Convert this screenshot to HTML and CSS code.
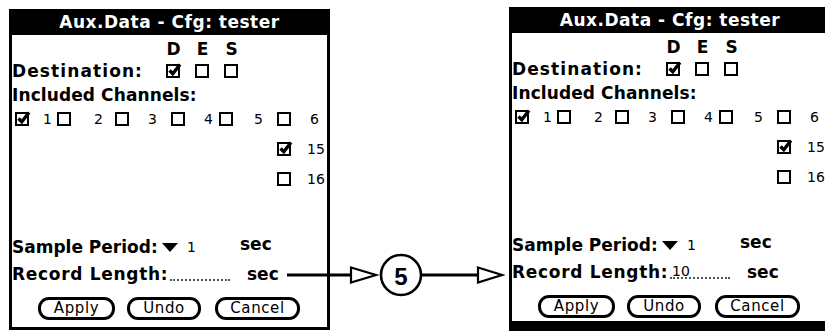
FILE: index.html
```html
<!DOCTYPE html>
<html>
<head>
<meta charset="utf-8">
<link rel="stylesheet" href="styles.css">
</head>
<body>
<svg class="defs" aria-hidden="true">
  <symbol id="cb" viewBox="0 0 16 16"><rect x="1" y="3" width="12" height="12" fill="#fff" stroke="#000" stroke-width="2"/></symbol>
  <symbol id="cbx" viewBox="0 0 16 16"><rect x="1" y="3" width="12" height="12" fill="#fff" stroke="#000" stroke-width="2"/><path d="M3.5 8.5 L6.8 11.8 L14 2.5" fill="none" stroke="#000" stroke-width="3.4"/></symbol>
  <symbol id="tri" viewBox="0 0 16 9"><path d="M0 0 H16 L8 9 Z" fill="#000"/></symbol>
</svg>
<div class="stage">
  <section class="screen screen-a">
    <div class="titlebar">Aux.Data - Cfg: tester</div>
    <div class="row des-head"><span class="label-space"></span><span class="cell">D</span><span class="cell">E</span><span class="cell">S</span></div>
    <div class="row dest"><span class="label-space dest-label">Destination:</span><span class="cell"><svg class="box"><use href="#cbx"/></svg></span><span class="cell"><svg class="box"><use href="#cb"/></svg></span><span class="cell"><svg class="box"><use href="#cb"/></svg></span></div>
    <div class="row inc">Included Channels:</div>
    <div class="channels">
      <div class="ch ch-1"><svg class="box"><use href="#cbx"/></svg><span>1</span></div>
      <div class="ch ch-2"><svg class="box"><use href="#cb"/></svg><span>2</span></div>
      <div class="ch"><svg class="box"><use href="#cb"/></svg><span>3</span></div>
      <div class="ch"><svg class="box"><use href="#cb"/></svg><span>4</span></div>
      <div class="ch ch-5"><svg class="box"><use href="#cb"/></svg><span>5</span></div>
      <div class="ch"><svg class="box"><use href="#cb"/></svg><span>6</span></div>
      <div class="ch ch-x"><svg class="box"><use href="#cbx"/></svg><span>15</span></div>
      <div class="ch ch-x"><svg class="box"><use href="#cb"/></svg><span>16</span></div>
    </div>
    <div class="row sample"><span class="sp-label">Sample Period:</span><span class="sp-value"><svg class="tri"><use href="#tri"/></svg><span>1</span></span><span class="unit-raised">sec</span></div>
    <div class="row record"><span class="rl-label">Record Length:</span><span class="field"></span><span class="unit">sec</span></div>
    <div class="buttons"><span class="btn btn-apply">Apply</span><span class="btn btn-undo">Undo</span><span class="btn btn-cancel">Cancel</span></div>
  </section>
  <section class="screen screen-b">
    <div class="titlebar">Aux.Data - Cfg: tester</div>
    <div class="row des-head"><span class="label-space"></span><span class="cell">D</span><span class="cell">E</span><span class="cell">S</span></div>
    <div class="row dest"><span class="label-space dest-label">Destination:</span><span class="cell"><svg class="box"><use href="#cbx"/></svg></span><span class="cell"><svg class="box"><use href="#cb"/></svg></span><span class="cell"><svg class="box"><use href="#cb"/></svg></span></div>
    <div class="row inc">Included Channels:</div>
    <div class="channels">
      <div class="ch ch-1"><svg class="box"><use href="#cbx"/></svg><span>1</span></div>
      <div class="ch ch-2"><svg class="box"><use href="#cb"/></svg><span>2</span></div>
      <div class="ch"><svg class="box"><use href="#cb"/></svg><span>3</span></div>
      <div class="ch"><svg class="box"><use href="#cb"/></svg><span>4</span></div>
      <div class="ch ch-5"><svg class="box"><use href="#cb"/></svg><span>5</span></div>
      <div class="ch"><svg class="box"><use href="#cb"/></svg><span>6</span></div>
      <div class="ch ch-x"><svg class="box"><use href="#cbx"/></svg><span>15</span></div>
      <div class="ch ch-x"><svg class="box"><use href="#cb"/></svg><span>16</span></div>
    </div>
    <div class="row sample"><span class="sp-label">Sample Period:</span><span class="sp-value"><svg class="tri"><use href="#tri"/></svg><span>1</span></span><span class="unit-raised">sec</span></div>
    <div class="row record"><span class="rl-label">Record Length:</span><span class="field">10</span><span class="unit">sec</span></div>
    <div class="buttons"><span class="btn btn-apply">Apply</span><span class="btn btn-undo">Undo</span><span class="btn btn-cancel">Cancel</span></div>
  </section>
  <svg class="connector" viewBox="0 0 220 50" width="220" height="50">
    <line x1="2" y1="25" x2="66" y2="25" stroke="#000" stroke-width="3"/>
    <path d="M66 17.5 L91 25 L66 32.5 Z" fill="#fff" stroke="#000" stroke-width="2.2" stroke-linejoin="miter"/>
    <circle cx="116" cy="25" r="20" fill="#fff" stroke="#000" stroke-width="2.6"/>
    <text x="116" y="26" text-anchor="middle" dominant-baseline="central" font-family="Liberation Sans, Arial, sans-serif" font-weight="bold" font-size="24">5</text>
    <line x1="136" y1="25" x2="193" y2="25" stroke="#000" stroke-width="3"/>
    <path d="M193 17.5 L217 25 L193 32.5 Z" fill="#fff" stroke="#000" stroke-width="2.2"/>
  </svg>
</div>
</body>
</html>
```

FILE: styles.css
```css
* { box-sizing: border-box; }

html, body {
  margin: 0;
  padding: 0;
  background: #fff;
  width: 825px;
  height: 331px;
  overflow: hidden;
}

.defs {
  position: absolute;
  width: 0;
  height: 0;
  overflow: hidden;
}

.stage {
  position: relative;
  display: flex;
  align-items: flex-start;
  gap: 179px;
  padding: 7px 0 0 9px;
  width: 825px;
  height: 331px;
  overflow: hidden;
}

.screen {
  flex: none;
  display: flex;
  flex-direction: column;
  border: 3px solid #000;
  border-top: 0;
  font-family: "DejaVu Sans", sans-serif;
  color: #000;
  overflow: hidden;
  background: #fff;
}

.screen-a {
  width: 321px;
  height: 321px;
  margin-top: 2px;
}

.screen-b {
  width: 322px;
  height: 324px;
  border-bottom-width: 10px;
}

.titlebar {
  height: 26px;
  background: #000;
  color: #fff;
  font-weight: bold;
  font-size: 17px;
  line-height: 26px;
  text-align: center;
  letter-spacing: 0.5px;
  white-space: nowrap;
}

.row {
  display: flex;
  align-items: center;
  height: 20px;
  font-weight: bold;
  font-size: 17px;
  line-height: 20px;
  white-space: nowrap;
}

.des-head { margin-top: 4px; }
.dest { margin-top: 2px; }
.inc { margin-top: 4px; letter-spacing: 0.1px; }

.label-space {
  width: 155px;
  flex: none;
}

.dest-label { letter-spacing: 1.1px; }

.cell {
  width: 13px;
  flex: none;
  display: flex;
  justify-content: center;
  margin-right: 16px;
}

.box {
  width: 16px;
  height: 16px;
  flex: none;
  overflow: visible;
  margin-top: -3px;
}

.channels {
  margin-top: 4px;
  display: grid;
  grid-template-columns: 42px 58px 56px 48px 58px 1fr;
  grid-auto-rows: 20px;
  row-gap: 10px;
  padding-left: 3px;
  font-size: 14px;
  line-height: 20px;
}

.ch {
  display: flex;
  align-items: center;
  gap: 17px;
}

.ch-1 { gap: 12px; }
.ch-2 { gap: 21px; }
.ch-5 { gap: 19px; }
.ch-x { grid-column: 6; gap: 14px; }

.sample { margin-top: 48px; }

.sp-label { width: 150px; flex: none; }

.sp-value {
  width: 78px;
  flex: none;
  display: flex;
  align-items: center;
  gap: 9px;
  font-weight: normal;
  font-size: 14px;
}

.tri {
  width: 16px;
  height: 9px;
}

.unit-raised {
  align-self: flex-start;
  line-height: 14px;
}

.record { margin-top: 7px; }

.rl-label {
  width: 158px;
  flex: none;
  letter-spacing: 0.7px;
}

.field {
  align-self: flex-start;
  width: 60px;
  height: 17px;
  padding-top: 3px;
  padding-left: 2px;
  flex: none;
  margin-right: 17px;
  border-bottom: 2px dotted #555;
  font-weight: normal;
  font-size: 14px;
  line-height: 12px;
}

.buttons {
  margin-top: 13px;
  display: flex;
  gap: 12px;
  padding-left: 26px;
}

.btn {
  height: 23px;
  border: 3px solid #000;
  border-radius: 11px;
  display: flex;
  align-items: center;
  justify-content: center;
  font-size: 15px;
  letter-spacing: 0.6px;
  line-height: 17px;
}

.btn-apply { width: 77px; }
.btn-undo { width: 74px; }
.btn-cancel { width: 85px; margin-left: 2px; }

.connector {
  position: absolute;
  left: 285px;
  top: 250px;
  z-index: 2;
}
```
